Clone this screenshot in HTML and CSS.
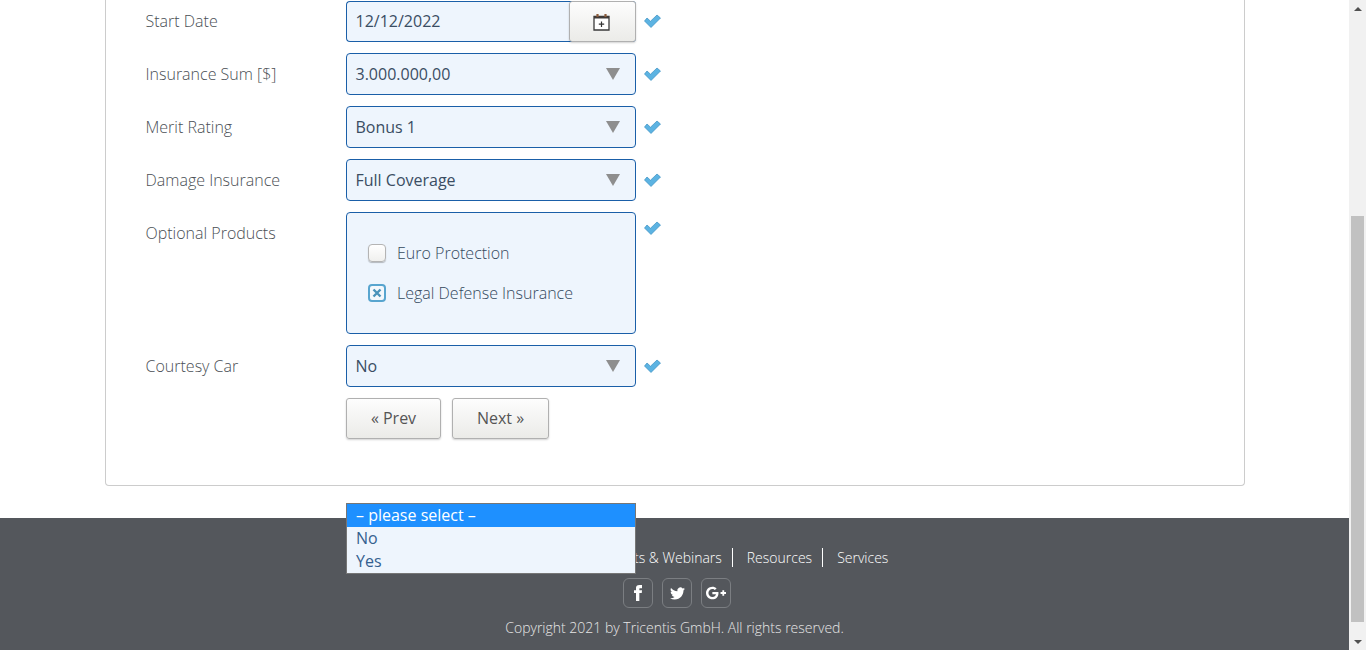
FILE: index.html
```html
<!DOCTYPE html>
<html lang="en">
<head>
<meta charset="utf-8">
<title>Enter Product Data</title>
<link rel="stylesheet" href="styles.css">
</head>
<body>
<div class="page">
  <main class="main">
    <section class="card">
      <div class="row">
        <label class="label">Start Date</label>
        <div class="date-field">
          <span class="date-value">12/12/2022</span>
          <button class="date-btn" type="button">
            <svg width="17" height="18" viewBox="0 0 17 18"><path d="M1 3.500h15v13.500H1z" fill="#fff" stroke="#3a3a3a" stroke-width="1.300"/><path d="M1 3h15v2.500H1z" fill="#3f3a38"/><path d="M4.500 1v3M12.500 1v3" stroke="#8a5a3a" stroke-width="2.200"/><path d="M8.500 8.500v5.500M5.800 11.200h5.400" stroke="#333" stroke-width="1.200"/></svg>
          </button>
        </div>
        <svg class="check" width="17" height="14" viewBox="0 0 17 14"><path d="M.5 7L3 4l3.500 3.200L13 1l3.500 3L7 13.500z" fill="#5cb3e2" stroke="#3a8fc2" stroke-width=".7"/></svg>
      </div>
      <div class="row">
        <label class="label">Insurance Sum [$]</label>
        <div class="select"><span>3.000.000,00</span><i class="arrow"></i></div>
        <svg class="check" width="17" height="14" viewBox="0 0 17 14"><path d="M.5 7L3 4l3.500 3.200L13 1l3.500 3L7 13.500z" fill="#5cb3e2" stroke="#3a8fc2" stroke-width=".7"/></svg>
      </div>
      <div class="row">
        <label class="label">Merit Rating</label>
        <div class="select"><span>Bonus 1</span><i class="arrow"></i></div>
        <svg class="check" width="17" height="14" viewBox="0 0 17 14"><path d="M.5 7L3 4l3.500 3.200L13 1l3.500 3L7 13.500z" fill="#5cb3e2" stroke="#3a8fc2" stroke-width=".7"/></svg>
      </div>
      <div class="row">
        <label class="label">Damage Insurance</label>
        <div class="select"><span>Full Coverage</span><i class="arrow"></i></div>
        <svg class="check" width="17" height="14" viewBox="0 0 17 14"><path d="M.5 7L3 4l3.500 3.200L13 1l3.500 3L7 13.500z" fill="#5cb3e2" stroke="#3a8fc2" stroke-width=".7"/></svg>
      </div>
      <div class="row row-top">
        <label class="label">Optional Products</label>
        <div class="options">
          <div class="option"><span class="box"></span><span>Euro Protection</span></div>
          <div class="option"><span class="box box-on"><svg width="10" height="10" viewBox="0 0 10 10"><path d="M1.500 1.500l7 7M8.500 1.500l-7 7" stroke="#4a93ba" stroke-width="2.400"/></svg></span><span>Legal Defense Insurance</span></div>
        </div>
        <svg class="check" width="17" height="14" viewBox="0 0 17 14"><path d="M.5 7L3 4l3.500 3.200L13 1l3.500 3L7 13.500z" fill="#5cb3e2" stroke="#3a8fc2" stroke-width=".7"/></svg>
      </div>
      <div class="row">
        <label class="label">Courtesy Car</label>
        <div class="select"><span>No</span><i class="arrow"></i></div>
        <svg class="check" width="17" height="14" viewBox="0 0 17 14"><path d="M.5 7L3 4l3.500 3.200L13 1l3.500 3L7 13.500z" fill="#5cb3e2" stroke="#3a8fc2" stroke-width=".7"/></svg>
      </div>
      <div class="actions">
        <button class="btn btn-prev" type="button">« Prev</button>
        <button class="btn btn-next" type="button">Next »</button>
      </div>
    </section>
    <footer class="footer">
      <nav class="nav">
        <a>Home</a>
        <a>About</a>
        <a>Events &amp; Webinars</a>
        <a>Resources</a>
        <a class="last">Services</a>
      </nav>
      <div class="social">
        <a class="soc"><svg width="16" height="16" viewBox="0 0 24 24"><path fill="#fff" d="M9 8H6v4h3v12h5V12h3.642L18 8h-4V6.333C14 5.378 14.192 5 15.115 5H18V0h-3.808C10.596 0 9 1.583 9 4.615V8z"/></svg></a>
        <a class="soc"><svg width="15" height="15" viewBox="0 0 24 24"><path fill="#fff" d="M23.953 4.57a10 10 0 01-2.825.775 4.958 4.958 0 002.163-2.723c-.951.555-2.005.959-3.127 1.184a4.92 4.92 0 00-8.384 4.482C7.69 8.095 4.067 6.13 1.64 3.162a4.822 4.822 0 00-.666 2.475c0 1.71.87 3.213 2.188 4.096a4.904 4.904 0 01-2.228-.616v.06a4.923 4.923 0 003.946 4.827 4.996 4.996 0 01-2.212.085 4.936 4.936 0 004.604 3.417 9.867 9.867 0 01-6.102 2.105c-.39 0-.779-.023-1.17-.067a13.995 13.995 0 007.557 2.209c9.053 0 13.998-7.496 13.998-13.985 0-.21 0-.42-.015-.63A9.935 9.935 0 0024 4.59z"/></svg></a>
        <a class="soc"><svg width="20" height="20" viewBox="0 0 24 24"><path fill="#fff" d="M7.635 10.909v2.619h4.335c-.173 1.125-1.31 3.295-4.331 3.295-2.604 0-4.731-2.16-4.731-4.823 0-2.662 2.122-4.822 4.728-4.822 1.485 0 2.479.633 3.045 1.178l2.073-1.994c-1.33-1.245-3.056-1.995-5.115-1.995C3.412 4.365 0 7.785 0 12s3.414 7.635 7.635 7.635c4.41 0 7.332-3.098 7.332-7.461 0-.501-.054-.885-.12-1.265H7.635zm16.365 0h-2.183V8.726h-2.183v2.183h-2.182v2.181h2.184v2.184h2.189V13.09H24"/></svg></a>
      </div>
      <p class="copy">Copyright 2021 by Tricentis GmbH. All rights reserved.</p>
    </footer>
    <ul class="dropdown">
      <li class="dd-item dd-active">– please select –</li>
      <li class="dd-item">No</li>
      <li class="dd-item">Yes</li>
    </ul>
  </main>
  <aside class="scrollbar">
    <i class="sb-up"></i>
    <div class="sb-track"><div class="sb-thumb"></div></div>
    <i class="sb-down"></i>
  </aside>
</div>
</body>
</html>
```
FILE: styles.css
```css
* { box-sizing: border-box; }
html, body { margin: 0; height: 650px; overflow: hidden; background: #fff; }
body { font-family: "Open Sans", "Liberation Sans", sans-serif; font-size: 16px; color: #555; }
.page { display: flex; width: 1366px; height: 650px; }
.main { position: relative; width: 1349px; display: flex; flex-direction: column; }

.card { width: 1140px; height: 486px; margin-left: 105px; padding: 0 0 0 39.5px; border: 1px solid #ccc; border-top: 0; border-radius: 0 0 4px 4px; }
.row { display: flex; align-items: center; height: 42px; margin-bottom: 11px; }
.row-top { align-items: flex-start; height: 122px; }
.label { width: 200.5px; font-weight: 300; font-size: 16px; color: #4a4f55; }
.row-top .label { padding-top: 10px; }
.row-top .check { margin-top: 9px; }
.check { margin-left: 8px; flex: none; }

.select, .date-field { width: 290px; height: 42px; border: 1px solid #1a5fa8; border-radius: 4px; background: #eef5fd; color: #3a4d63; display: flex; align-items: center; }
.select { justify-content: space-between; padding: 0 15px 0 8.5px; }
.arrow { width: 0; height: 0; border-left: 7px solid transparent; border-right: 7px solid transparent; border-top: 12px solid #8e8e8e; }
.date-field { height: 41px; align-self: flex-end; padding-left: 8.5px; justify-content: space-between; border-right: 0; }
.date-value { margin-top: -2px; }
.date-btn { width: 67px; height: 41px; margin: -1px 0; padding: 0 2px 0 0; border: 1px solid #b0b0b0; border-radius: 3px; background: linear-gradient(#fdfdfd, #ebebe8); box-shadow: 0 1px 2px rgba(0,0,0,.18); display: flex; align-items: center; justify-content: center; }

.options { width: 290px; height: 122px; border: 1px solid #1a5fa8; border-radius: 4px; background: #eef5fd; padding: 28px 0 0 21px; display: flex; flex-direction: column; gap: 16px; font-weight: 300; color: #34495e; }
.option { display: flex; align-items: center; gap: 11px; height: 24px; }
.box { width: 18px; height: 18px; border: 1px solid #b4b4b4; border-radius: 4px; background: linear-gradient(#fff, #f0f0ee); box-shadow: 0 1px 1px rgba(0,0,0,.25); display: flex; align-items: center; justify-content: center; }
.box-on { border: 2px solid #58a5cf; background: #f4f8fc; box-shadow: none; }

.actions { display: flex; gap: 11px; margin-left: 200.5px; }
.btn { height: 41px; border: 1px solid #b0b0b0; border-radius: 3px; background: linear-gradient(#fdfdfd, #ebebe8); box-shadow: 0 1px 2px rgba(0,0,0,.18); font-family: inherit; font-size: 16px; color: #555; padding: 0 0 1px; }
.btn-prev { width: 95px; }
.btn-next { width: 97px; }

.footer { margin-top: 32px; height: 132px; background: #54575c; display: flex; flex-direction: column; align-items: center; padding-top: 30px; color: #fff; font-size: 14px; }
.nav { display: flex; height: 19px; align-items: center; padding-left: 3px; font-weight: 300; }
.nav a { padding: 0 10px 0 14px; border-right: 1px solid #fff; line-height: 19px; }
.nav a.last { border-right: 0; padding-right: 0; }
.social { display: flex; gap: 9px; margin-top: 11px; padding-left: 5px; }
.soc { width: 30px; height: 30px; border: 1px solid #7b7e82; border-radius: 6px; display: flex; align-items: center; justify-content: center; }
.copy { margin: 10px 0 0; font-weight: 300; color: #e6e6e6; }

.dropdown { position: absolute; left: 346px; top: 503px; width: 290px; height: 71px; margin: 0; padding: 0; list-style: none; background: #eef5fd; border: 1px solid #767676; color: #34608f; }
.dd-item { height: 23px; line-height: 23px; padding-left: 9px; }
.dd-active { background: #1e90ff; color: #fff; }

.scrollbar { width: 17px; height: 650px; background: #f1f1f1; display: flex; flex-direction: column; align-items: center; }
.sb-track { flex: 1; width: 100%; padding: 205px 2px 18px; }
.sb-thumb { height: 100%; background: #c1c1c1; }
.sb-up { margin-top: 7px; width: 0; height: 0; border-left: 4px solid transparent; border-right: 4px solid transparent; border-bottom: 4px solid #505050; flex: none; }
.sb-down { margin-bottom: 6px; width: 0; height: 0; border-left: 4px solid transparent; border-right: 4px solid transparent; border-top: 4px solid #505050; flex: none; }
```
